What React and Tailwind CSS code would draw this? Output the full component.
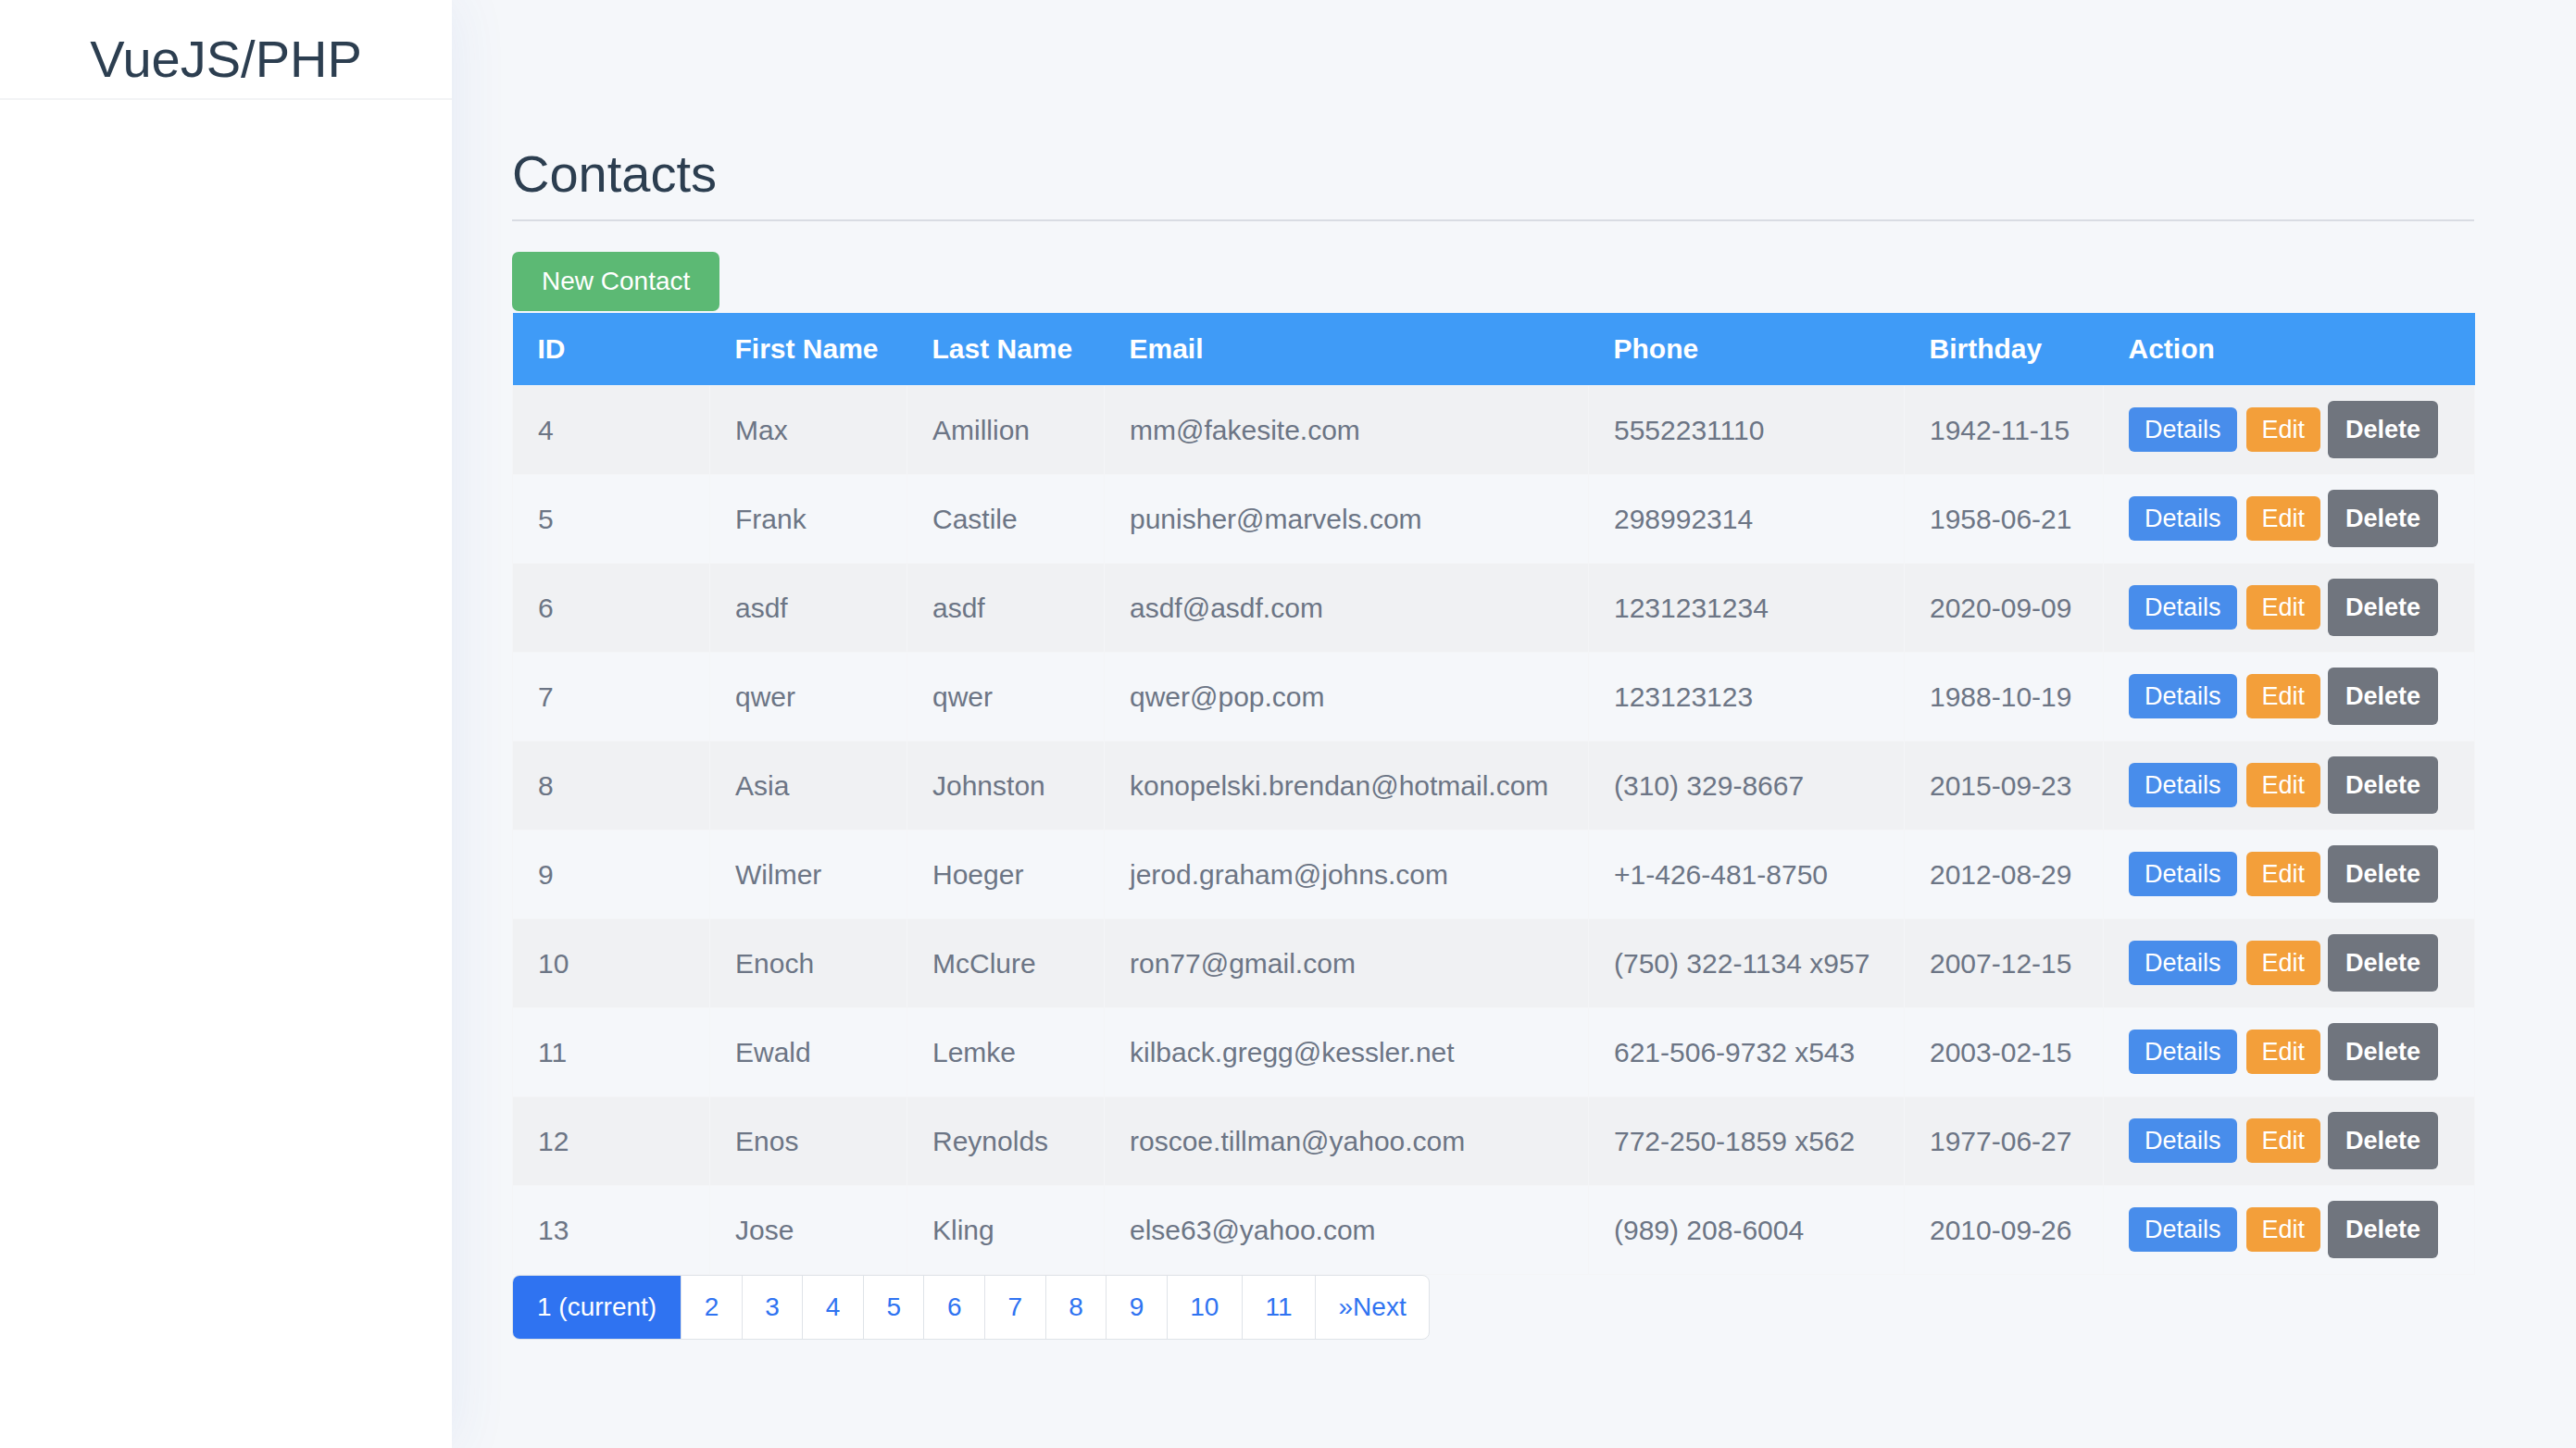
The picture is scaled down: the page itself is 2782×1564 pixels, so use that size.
import React from 'react';

const contacts = [
    { id: 4, first: 'Max', last: 'Amillion', email: 'mm@fakesite.com', phone: '5552231110', birthday: '1942-11-15' },
    { id: 5, first: 'Frank', last: 'Castile', email: 'punisher@marvels.com', phone: '298992314', birthday: '1958-06-21' },
    { id: 6, first: 'asdf', last: 'asdf', email: 'asdf@asdf.com', phone: '1231231234', birthday: '2020-09-09' },
    { id: 7, first: 'qwer', last: 'qwer', email: 'qwer@pop.com', phone: '123123123', birthday: '1988-10-19' },
    { id: 8, first: 'Asia', last: 'Johnston', email: 'konopelski.brendan@hotmail.com', phone: '(310) 329-8667', birthday: '2015-09-23' },
    { id: 9, first: 'Wilmer', last: 'Hoeger', email: 'jerod.graham@johns.com', phone: '+1-426-481-8750', birthday: '2012-08-29' },
    { id: 10, first: 'Enoch', last: 'McClure', email: 'ron77@gmail.com', phone: '(750) 322-1134 x957', birthday: '2007-12-15' },
    { id: 11, first: 'Ewald', last: 'Lemke', email: 'kilback.gregg@kessler.net', phone: '621-506-9732 x543', birthday: '2003-02-15' },
    { id: 12, first: 'Enos', last: 'Reynolds', email: 'roscoe.tillman@yahoo.com', phone: '772-250-1859 x562', birthday: '1977-06-27' },
    { id: 13, first: 'Jose', last: 'Kling', email: 'else63@yahoo.com', phone: '(989) 208-6004', birthday: '2010-09-26' },
];

const pages = ['2', '3', '4', '5', '6', '7', '8', '9', '10', '11', '»Next'];

export default function App() {
    return (
        <div className="flex min-h-screen w-full bg-[#f5f7fa] font-['Liberation_Sans',Arial,sans-serif]">
            {/* sidebar */}
            <aside className="relative z-10 w-[488px] shrink-0 bg-white shadow-[0_0_60px_rgba(60,100,200,0.09)]">
                <div className="h-[108px] border-b-2 border-[#f2f3f5] pt-[31px] text-center text-[56px] leading-[66px] text-[#2c3e50]">
                    VueJS/PHP
                </div>
            </aside>

            {/* main */}
            <main className="flex-1 pl-[65px] pt-[155px]">
                <div className="w-[2119px]">
                    <h1 className="border-b-2 border-[#d9dce3] pb-[16px] text-[56px] leading-[66px] text-[#2c3e50]">Contacts</h1>

                    <button className="mt-[33px] h-[64px] rounded-[7px] bg-[#5cb974] px-[32px] text-[28px] text-white">
                        New Contact
                    </button>

                    <table className="mt-[2px] w-[2119px] table-fixed border-collapse text-[30px]">
                        <colgroup>
                            <col className="w-[213px]" />
                            <col className="w-[213px]" />
                            <col className="w-[213px]" />
                            <col className="w-[523px]" />
                            <col className="w-[341px]" />
                            <col className="w-[215px]" />
                            <col className="w-[401px]" />
                        </colgroup>
                        <thead>
                            <tr className="h-[78px] bg-[#3f9bf7] text-left font-bold text-white">
                                <th className="pl-[27px]">ID</th>
                                <th className="pl-[27px]">First Name</th>
                                <th className="pl-[27px]">Last Name</th>
                                <th className="pl-[27px]">Email</th>
                                <th className="pl-[27px]">Phone</th>
                                <th className="pl-[27px]">Birthday</th>
                                <th className="pl-[27px]">Action</th>
                            </tr>
                        </thead>
                        <tbody className="text-[#6c7585]">
                            {contacts.map((c, i) => (
                                <tr key={c.id} className={i % 2 === 0 ? 'h-[96px] bg-[#f0f1f3]' : 'h-[96px] bg-[#f5f7fa]'}>
                                    <td className="border border-[#f4f5f7] pl-[27px]">{c.id}</td>
                                    <td className="border border-[#f4f5f7] pl-[27px]">{c.first}</td>
                                    <td className="border border-[#f4f5f7] pl-[27px]">{c.last}</td>
                                    <td className="border border-[#f4f5f7] pl-[27px]">{c.email}</td>
                                    <td className="border border-[#f4f5f7] pl-[27px]">{c.phone}</td>
                                    <td className="border border-[#f4f5f7] pl-[27px]">{c.birthday}</td>
                                    <td className="border border-[#f4f5f7] pl-[27px]">
                                        <div className="flex items-center text-[27px] text-white">
                                            <button className="h-[48px] rounded-[6px] bg-[#488deb] px-[17px]">Details</button>
                                            <button className="ml-[10px] h-[48px] rounded-[6px] bg-[#f39f3a] px-[17px]">Edit</button>
                                            <button className="ml-[8px] h-[62px] rounded-[6px] bg-[#70757e] px-[19px] font-bold">Delete</button>
                                        </div>
                                    </td>
                                </tr>
                            ))}
                        </tbody>
                    </table>

                    {/* pagination */}
                    <div className="flex">
                        <div className="flex h-[70px] overflow-hidden rounded-[8px] border border-[#dfe3e8] bg-white text-[28px] text-[#2f73f1]">
                            <span className="-m-px flex items-center bg-[#2f73f1] px-[27px] text-white">1 (current)</span>
                            {pages.map((p) => (
                                <span key={p} className="flex items-center border-l border-[#dfe3e8] px-[24.5px] first:border-l-0">
                                    {p}
                                </span>
                            ))}
                        </div>
                    </div>
                </div>
            </main>
        </div>
    );
}
